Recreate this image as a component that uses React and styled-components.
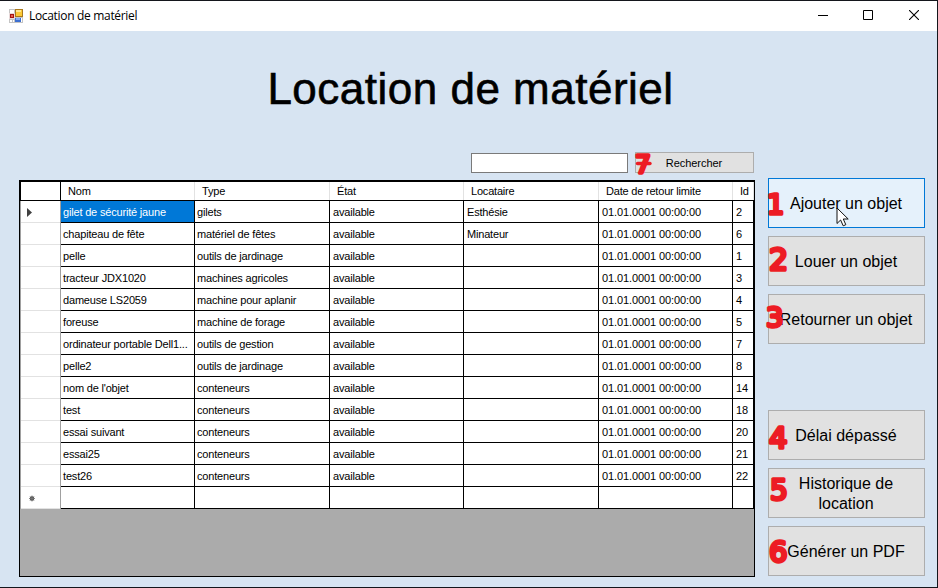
import React from "react";
import styled, { createGlobalStyle, css } from "styled-components";

const Global = createGlobalStyle`
  * { box-sizing: border-box; }
  body { margin: 0; overflow: hidden; }
`;

const Window = styled.div`
  width: 938px;
  height: 588px;
  display: flex;
  flex-direction: column;
  background: #d7e4f2;
  border: solid #14161c;
  border-width: 1px 1px 1px 0;
  font-family: "Liberation Sans", Arial, sans-serif;
  color: #000;
`;

const TitleBar = styled.header`
  height: 30px;
  flex: none;
  display: flex;
  align-items: center;
  background: #fff;
  padding-left: 9px;
`;

const Caption = styled.span`
  flex: 1;
  margin-left: 6px;
  font: 12px/16px "Open Sans", "Noto Sans", sans-serif;
  letter-spacing: -0.32px;
`;

const Controls = styled.div`
  display: flex;
`;

const ControlButton = styled.button`
  width: 46px;
  height: 30px;
  padding: 0 0 2px;
  border: 0;
  background: none;
  display: grid;
  place-items: center;
`;

const Heading = styled.h1`
  margin: 33px 0 0;
  height: 50px;
  padding-left: 4px;
  text-align: center;
  font-size: 44px;
  line-height: 50px;
  font-weight: 400;
  letter-spacing: 0.5px;
  -webkit-text-stroke: 0.6px #000;
`;

const Main = styled.main`
  flex: 1;
  display: flex;
  gap: 13px;
  padding: 38px 12px 10px 19px;
`;

const ListPane = styled.section`
  width: 736px;
  display: flex;
  flex-direction: column;
`;

const SearchBar = styled.div`
  display: flex;
  justify-content: flex-end;
  align-items: flex-start;
  gap: 7px;
  height: 28px;
  padding-right: 1px;
`;

const SearchInput = styled.input`
  width: 157px;
  height: 20px;
  margin: 1px 0 0;
  padding: 0 3px;
  border: 1px solid #7a7a7a;
  background: #fff;
  outline: none;
`;

const ButtonBase = styled.button`
  position: relative;
  margin: 0;
  border: 1px solid #adadad;
  background: #e1e1e1;
  color: #000;
  font-family: inherit;
`;

const SearchButton = styled(ButtonBase)`
  width: 119px;
  height: 21px;
  padding: 0 1px 0 0;
  font-size: 11px;
  line-height: 20px;
  letter-spacing: -0.05px;
`;

const SideButton = styled(ButtonBase)`
  width: 157px;
  height: 50px;
  padding: 1px 19px 0 18px;
  font-size: 16px;
  line-height: 20px;
  white-space: ${(p) => (p.$wrap ? "normal" : "nowrap")};
  display: flex;
  align-items: center;
  justify-content: center;
  ${(p) =>
    p.$hot &&
    css`
      background: #e5f1fb;
      border-color: #0078d7;
    `}
`;

const Side = styled.nav`
  width: 157px;
  padding-top: 26px;
  display: flex;
  flex-direction: column;
  gap: 66px;
`;

const ButtonGroup = styled.div`
  display: flex;
  flex-direction: column;
  gap: 8px;
`;

const MarkBox = styled.svg`
  position: absolute;
  left: ${(p) => p.$x}px;
  top: ${(p) => p.$y}px;
  overflow: visible;
  pointer-events: none;
  fill: #ed1c24;
  stroke: #ed1c24;
  stroke-width: 3.4px;
  stroke-linejoin: round;
  stroke-linecap: round;
  font-family: "DejaVu Sans", sans-serif;
`;

const Mark = ({ digit, x, y, size, bar }) => (
  <MarkBox $x={x} $y={y} width="18" height="26">
    <text x="0" y="23" fontSize={size}>
      {digit}
    </text>
    {bar && <path d="M2.5 13.5H15" />}
  </MarkBox>
);

const Pointer = styled.svg`
  position: absolute;
  left: 67px;
  top: 28px;
`;

const DataGrid = styled.div`
  flex: 1;
  background: #ababab;
  border: 1px solid #000;
`;

const columns = "41px 134px 135px 134px 135px 134px 21px";

const HeadRow = styled.div`
  display: grid;
  grid-template-columns: ${columns};
  height: 20px;
  background: #fff;
  border: solid #000;
  border-width: 1px 0;
`;

const HeadCell = styled.div`
  padding-left: 7px;
  border-right: 1px solid #e2e2e2;
  font-size: 11px;
  line-height: 18px;
  white-space: nowrap;
  letter-spacing: -0.2px;
`;

const Corner = styled.div`
  border: solid #000;
  border-width: 0 1px;
`;

const Row = styled.div`
  display: grid;
  grid-template-columns: ${columns};
  height: 22px;
  background: #fff;
`;

const RowHeader = styled.div`
  display: flex;
  align-items: center;
  padding-left: 5px;
  border: solid #a0a0a0;
  border-width: 0 1px;
  background: linear-gradient(#e2e2e2, #e2e2e2) 0 100% / 100% 1px no-repeat;
`;

const Cell = styled.div`
  overflow: hidden;
  text-overflow: ellipsis;
  white-space: nowrap;
  padding-left: ${(p) => (p.$wide ? 3 : 2)}px;
  border: solid #000;
  border-width: 0 1px 1px 0;
  font-size: 11px;
  line-height: 22px;
  letter-spacing: ${(p) => (p.$numeric ? -0.1 : -0.18)}px;
  ${(p) =>
    p.$selected &&
    css`
      background: #0078d7;
      color: #fff;
    `}
`;

const date = "01.01.0001 00:00:00";
const items = [
  ["gilet de sécurité jaune", "gilets", "Esthésie", 2],
  ["chapiteau de fête", "matériel de fêtes", "Minateur", 6],
  ["pelle", "outils de jardinage", "", 1],
  ["tracteur JDX1020", "machines agricoles", "", 3],
  ["dameuse LS2059", "machine pour aplanir", "", 4],
  ["foreuse", "machine de forage", "", 5],
  ["ordinateur portable Dell1...", "outils de gestion", "", 7],
  ["pelle2", "outils de jardinage", "", 8],
  ["nom de l'objet", "conteneurs", "", 14],
  ["test", "conteneurs", "", 18],
  ["essai suivant", "conteneurs", "", 20],
  ["essai25", "conteneurs", "", 21],
  ["test26", "conteneurs", "", 22],
];

const FormIcon = () => (
  <svg width="14" height="14" viewBox="0 0 14 14" shapeRendering="crispEdges">
    <path d="M0 0h14v14H0z" fill="#c4c4c4" />
    <path d="M1 1h4v3H1zM1 11h2v2H1zM4 11h1v2H4zM12 9h1v4h-1z" fill="#fff" />
    <path d="M6 0h8v8H6z" fill="#a9781c" />
    <path d="M7 1h6v6H7z" fill="#fbc936" />
    <path d="M7 1h5v2H7z" fill="#ffe793" />
    <path d="M0 4h6v6H0z" fill="#e8d8d8" />
    <path d="M1 5h4v4H1z" fill="#a31515" />
    <path d="M2 6h2v2H2z" fill="#e8604c" />
    <path d="M6 9h6v4H6z" fill="#3c6fd1" />
    <path d="M7 9h4v2H7z" fill="#86abf0" />
  </svg>
);

export default function App() {
  return (
    <Window>
      <Global />
      <TitleBar>
        <FormIcon />
        <Caption>Location de matériel</Caption>
        <Controls>
          <ControlButton aria-label="Réduire">
            <svg width="11" height="10" shapeRendering="crispEdges">
              <path d="M1 5h10v1H1z" />
            </svg>
          </ControlButton>
          <ControlButton aria-label="Agrandir">
            <svg width="10" height="10">
              <path d="M.5.5h9v9h-9z" fill="none" stroke="#000" />
            </svg>
          </ControlButton>
          <ControlButton aria-label="Fermer">
            <svg width="10" height="10">
              <path d="M0 0l10 10M10 0L0 10" stroke="#000" strokeWidth="1.1" />
            </svg>
          </ControlButton>
        </Controls>
      </TitleBar>
      <Heading>Location de matériel</Heading>
      <Main>
        <ListPane>
          <SearchBar>
            <SearchInput aria-label="Recherche" />
            <SearchButton>
              Rechercher
              <Mark digit="7" x={-1} y={-3} size={25} bar />
            </SearchButton>
          </SearchBar>
          <DataGrid>
            <HeadRow>
              <Corner />
              <HeadCell>Nom</HeadCell>
              <HeadCell>Type</HeadCell>
              <HeadCell>État</HeadCell>
              <HeadCell>Locataire</HeadCell>
              <HeadCell>Date de retour limite</HeadCell>
              <HeadCell>Id</HeadCell>
            </HeadRow>
            {items.map(([name, type, renter, id], i) => (
              <Row key={id}>
                <RowHeader>
                  {i === 0 && (
                    <svg width="7" height="9">
                      <path d="M1 0l5 4.5L1 9z" fill="#404040" />
                    </svg>
                  )}
                </RowHeader>
                <Cell $selected={i === 0}>{name}</Cell>
                <Cell>{type}</Cell>
                <Cell $wide>available</Cell>
                <Cell $wide>{renter}</Cell>
                <Cell $wide $numeric>{date}</Cell>
                <Cell $wide $numeric>{id}</Cell>
              </Row>
            ))}
            <Row>
              <RowHeader>
                <svg width="10" height="7">
                  <circle cx="6" cy="3.5" r="2.3" fill="#444" />
                  <path
                    d="M6 .5v6M3 3.5h6M4 1.5l4 4M8 1.5l-4 4"
                    stroke="#777"
                    strokeWidth=".8"
                  />
                </svg>
              </RowHeader>
              <Cell />
              <Cell />
              <Cell />
              <Cell />
              <Cell />
              <Cell />
            </Row>
          </DataGrid>
        </ListPane>
        <Side>
          <ButtonGroup>
            <SideButton $hot>
              Ajouter un objet
              <Mark digit="1" x={-2} y={12} size={27} />
              <Pointer width="13" height="20" viewBox="0 0 13 20">
                <path
                  d="M1 1v15.5l3.6-3.5 2.6 5.8 2.6-1.1-2.5-5.7h4.9z"
                  fill="#fff"
                  stroke="#111"
                />
              </Pointer>
            </SideButton>
            <SideButton>
              Louer un objet
              <Mark digit="2" x={0} y={10} size={30} />
            </SideButton>
            <SideButton>
              Retourner un objet
              <Mark digit="3" x={-3} y={9} size={27} />
            </SideButton>
          </ButtonGroup>
          <ButtonGroup>
            <SideButton>
              Délai dépassé
              <Mark digit="4" x={0} y={14} size={29} />
            </SideButton>
            <SideButton $wrap>
              Historique de location
              <Mark digit="5" x={1} y={8} size={28} />
            </SideButton>
            <SideButton>
              Générer un PDF
              <Mark digit="6" x={0} y={12} size={29} />
            </SideButton>
          </ButtonGroup>
        </Side>
      </Main>
    </Window>
  );
}
